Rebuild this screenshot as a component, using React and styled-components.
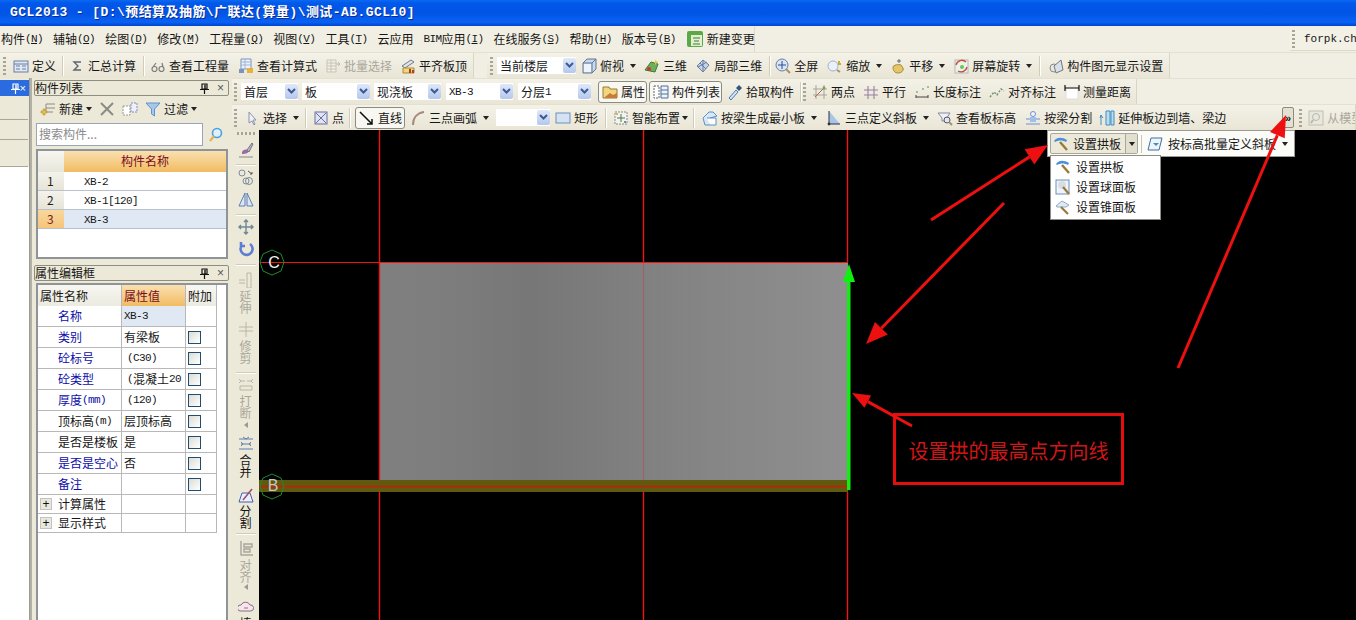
import React from 'react';
import styled, { createGlobalStyle } from 'styled-components';

const Global = createGlobalStyle`
  html, body { margin: 0; padding: 0; background: #000; overflow: hidden; }
  * { box-sizing: border-box; }
`;
const CJK = `"Noto Sans CJK SC", "Liberation Sans", sans-serif`;

const Page = styled.div`
  position: relative; width: 1356px; height: 620px; overflow: hidden;
  display: flex; flex-direction: column; background: #ece9d8;
  font: 12px/14px ${CJK}; color: #161616; white-space: nowrap;
`;
const TitleBar = styled.div`
  height: 26px; flex: none; padding-left: 10px; display: flex; align-items: center;
  background: linear-gradient(#0a6af0 0, #0258ea 12%, #0054e6 50%, #0a62f2 85%, #0044cf 100%);
  color: #fff; font: bold 13px/26px "Liberation Mono", ${CJK}; letter-spacing: 0.43px;
  text-shadow: 1px 1px 0 #0a2c96;
`;
const MenuRow = styled.div`
  height: 26px; flex: none; display: flex; align-items: center; background: #f1efe3;
`;
const MenuBar = styled.div`
  width: 755px; height: 26px; display: flex; align-items: center; padding-left: 1px; gap: 10px;
  border-right: 1px solid #dedbc9;
`;
const MenuItem = styled.span`display: flex; align-items: center;`;
const NewChange = styled.span`display: flex; align-items: center; gap: 4px; margin-left: 1px;`;
const Corner = styled.div`
  margin-left: auto; width: 66px; height: 24px; display: flex; align-items: center; gap: 9px;
  padding-left: 2px; background: #f3f1e6; border-bottom: 1px solid #dcd9c8;
  font: 11px/14px "Liberation Mono", monospace;
`;
const Mono = styled.span`
  font: 11px/14px "Liberation Mono", monospace; letter-spacing: -0.6px; white-space: pre;
`;
const BarRow = styled.div`
  height: 26px; flex: none; display: flex; background: #f1efe3; border-top: 1px solid #e4e1d0;
`;
const Bar = styled.div`
  height: 25px; display: flex; align-items: center; flex: ${p => p.$grow ? 1 : 'none'};
  background: linear-gradient(#f4f2e8, #e9e6d6);
  padding-right: ${p => p.$pad ?? 6}px; margin-left: ${p => p.$ml ?? 0}px;
  border-right: 1px solid #d9d6c4; overflow: hidden;
`;
const Grip = styled.i`
  flex: none; width: 3px; height: 18px; margin-left: ${p => p.$ml}px;
  background: repeating-linear-gradient(#a8a592 0 2px, transparent 2px 4px);
`;
const Sep = styled.i`
  flex: none; width: 2px; height: 20px; margin-left: ${p => p.$ml}px;
  border-left: 1px solid #cfccb9; border-right: 1px solid #fff;
`;
const Tool = styled.span`
  flex: none; display: flex; align-items: center; gap: 3px; margin-left: ${p => p.$ml}px;
  color: ${p => p.$off ? '#aaa79c' : '#161616'};
`;
const Caret = styled.i`
  flex: none; width: 0; height: 0; margin-left: ${p => p.$ml ?? 6}px; margin-right: ${p => p.$mr ?? 0}px;
  border: 3.5px solid transparent; border-top: 4px solid #222; border-bottom: 0;
`;
const Ic = styled.svg`flex: none; width: 16px; height: 16px; display: block;`;
const Combo = styled.span`
  flex: none; display: flex; align-items: center; height: 17px; width: ${p => p.$w}px; margin-left: ${p => p.$ml}px;
  background: #fff; padding-left: 3px; color: #161616;
`;
const ComboBtn = styled.i`
  margin-left: auto; width: 13px; height: 15px; display: flex; align-items: center; justify-content: center;
  background: linear-gradient(#dfe8f8, #b4c8ec); border-radius: 2px;
`;
const Toggle = styled.span`
  flex: none; display: flex; align-items: center; gap: 3px; height: 22px; width: ${p => p.$w}px;
  margin-left: ${p => p.$ml}px; padding-left: 3px; background: #f8f7f2;
  border: 1px solid #8b8b80; border-radius: 3px;
`;
const More = styled.span`
  flex: none; width: 12px; height: 21px; margin-left: ${p => p.$ml}px; display: flex; align-items: center; justify-content: center;
  background: #e4e1d0; border: 1px solid #8b8b80; border-radius: 2px; font: bold 11px/10px "Liberation Sans", sans-serif;
`;
const Main = styled.div`flex: 1; display: flex; min-height: 0;`;
const Stub = styled.div`
  width: 30px; flex: none; display: flex; flex-direction: column; padding-top: 2px;
  border-right: 1px solid #9b9a90; background: #ece9d8;
`;
const StubTitle = styled.div`
  height: 16px; flex: none; display: flex; align-items: center; justify-content: space-between; padding: 0 3px 0 2px;
  background: #2a6bdf; color: #fff; font: 11px/14px "Liberation Sans", sans-serif;
`;
const StubRow = styled.div`
  height: ${p => p.$h}px; flex: none; border-bottom: 1px solid #a9a79a; margin-right: 1px;
`;
const StubBody = styled.div`flex: 1; background: #fff;`;
const Panels = styled.div`
  width: 202px; flex: none; display: flex; flex-direction: column; padding: 2px 3px 0 2px;
  border-left: 2px solid #b3b1a5; background: #ece9d8;
`;
const PanelTitle = styled.div`
  height: 16px; flex: none; display: flex; align-items: center; padding-right: 4px;
  margin-top: ${p => p.$mt ?? 0}px; background: #ece9d8; border: 1px solid #8f8d80; border-radius: 2px;
  font-size: 12px;
`;
const PinBox = styled.svg`margin-left: auto; flex: none; width: 9px; height: 11px; display: block;`;
const Close = styled.span`margin-left: 8px; color: #555; font: 12px/12px "Liberation Sans", sans-serif;`;
const PanelTools = styled.div`height: 26px; flex: none; display: flex; align-items: center;`;
const SearchRow = styled.div`height: 23px; margin-top: 1px; margin-left: 2px; flex: none; display: flex; align-items: center; gap: 5px;`;
const SearchBox = styled.div`
  width: 167px; height: 23px; padding: 3px 2px; background: #fff; color: #8a8a8a;
  border: 1px solid #9aa5b5;
`;
const ListBox = styled.div`
  height: 110px; flex: none; margin: 3px 1px 0 2px; border: 2px solid #8f9498; background: #fff;
`;
const ListHead = styled.div`display: grid; grid-template-columns: 26px 162px; height: 21px;`;
const HeadBlank = styled.div`background: linear-gradient(#f7f6f0, #e8e6da);`;
const HeadOrange = styled.div`
  display: flex; align-items: center; justify-content: center; color: #7a0c22; padding-bottom: 2px;
  background: linear-gradient(#f9e0b0, #f2bb62);
`;
const ListRow = styled.div`
  display: grid; grid-template-columns: 26px 162px; height: 19px;
  border-bottom: 1px solid #b9c2cc;
  background: ${p => p.$sel ? '#dfe8f3' : '#fff'};
`;
const ListIdx = styled.div`
  padding: 0 0 0 9px; display: flex; align-items: center;
  background: ${p => p.$sel ? 'linear-gradient(#f8d79c, #f5c57a)' : 'linear-gradient(#f4f3ec, #e6e4d8)'};
  color: ${p => p.$sel ? '#7a1c22' : '#222'};
`;
const ListName = styled.div`padding: 1px 0 0 20px; display: flex; align-items: center;`;
const PropBox = styled.div`
  flex: 1; margin: 2px 1px 0 2px; border: 2px solid #8f9498; border-bottom: 0; background: #fff;
`;
const PropRow = styled.div`
  display: grid; grid-template-columns: 84px 64px 31px; width: 179px; height: ${p => p.$h}px;
`;
const PCell = styled.div`
  display: flex; align-items: center; border-right: 1px solid #b8b8b8; border-bottom: 1px solid #b8b8b8;
  padding-left: ${p => p.$pl ?? 2}px; color: ${p => p.$c || '#161616'};
  background: ${p => p.$bg || 'transparent'};
  overflow: hidden;
`;
const HeadCell = styled(PCell)`border-bottom: 0;`;
const Check = styled.i`
  width: 13px; height: 13px; border: 1px solid #1f4e72; background: linear-gradient(135deg, #dcdcd4, #fff);
`;
const Plus = styled.i`
  width: 12px; height: 12px; margin-right: 6px; display: flex; align-items: center; justify-content: center;
  background: #e8e8e0; border: 1px solid #c4c4bc; font: normal 12px/10px "Liberation Sans", sans-serif; color: #111;
`;
const Right = styled.div`flex: 1; min-width: 0; display: flex; flex-direction: column;`;
const Work = styled.div`flex: 1; min-height: 0; display: flex;`;
const VBar = styled.div`
  width: 27px; flex: none; display: flex; flex-direction: column; align-items: center; background: #ece9d8;
`;
const VGrip = styled.i`
  width: 18px; height: 3px; margin-top: 2px; flex: none;
  background: repeating-linear-gradient(90deg, #a8a592 0 2px, transparent 2px 4px);
`;
const VSep = styled.i`
  width: 20px; height: 2px; flex: none; margin-top: ${p => p.$mt}px;
  border-top: 1px solid #cfccb9; border-bottom: 1px solid #fff;
`;
const VIcon = styled.span`flex: none; margin-top: ${p => p.$mt}px; display: block; height: 16px;`;
const VText = styled.span`
  flex: none; width: 12px; margin-top: ${p => p.$mt}px; white-space: normal; line-height: 12px; word-break: break-all;
  color: ${p => p.$off ? '#aaa79c' : '#161616'};
`;
const VBack = styled.i`
  flex: none; margin-top: ${p => p.$mt}px; width: 0; height: 0; border: 3px solid transparent; border-right: 4px solid #999; border-left: 0;
`;
const Canvas = styled.div`position: relative; flex: 1; background: #000; overflow: hidden;`;
const CanvasArt = styled.svg`position: absolute; left: 0; top: 0; width: 1097px; height: 490px;`;
const Note = styled.div`
  position: absolute; left: 634px; top: 283px; width: 231px; height: 72px;
  border: 3px solid #e40e0e; display: flex; align-items: center; justify-content: center; padding-top: 3px;
  color: #cf1616; font: 20px/24px ${CJK};
`;
const Popup = styled.div`
  position: absolute; left: 1047px; top: 130px; width: 248px; height: 27px; display: flex; align-items: center;
  background: #fbfbf8; border: 1px solid #9a9a92; padding-left: 2px;
`;
const SplitBtn = styled.span`
  width: 88px; height: 21px; display: flex; align-items: center; padding-left: 2px; gap: 4px;
  background: #ece9d8; border: 1px solid #a9a79a; border-radius: 2px;
`;
const SplitArrow = styled.i`
  margin-left: auto; width: 12px; height: 19px; display: flex; align-items: center; justify-content: center; border-left: 1px solid #a9a79a; background:#e2dfce;
`;
const PopupSep = styled.i`width: 1px; height: 18px; margin-left: 3px; background: #c9c6b5;`;
const PopupTool = styled.span`display: flex; align-items: center; gap: 5px; margin-left: 5px;`;
const Drop = styled.div`
  position: absolute; left: 1050px; top: 155px; width: 111px; height: 65px; padding-top: 1px;
  background: #fff; border: 1px solid #8d8d85;
`;
const DropItem = styled.div`height: 20px; display: flex; align-items: center; gap: 5px; padding-left: 4px;`;
const Overlay = styled.svg`position: absolute; left: 0; top: 0; width: 1356px; height: 620px; pointer-events: none;`;

const T = ({ children }) => String(children).split(/([\x00-\x7f]+)/).filter(Boolean).map((s, i) =>
  /[\x00-\x7f]/.test(s[0]) ? <Mono key={i}>{s}</Mono> : <span key={i}>{s}</span>);

const icons = {
  define: <><rect x="1" y="3" width="14" height="11" fill="#dfe8f5" stroke="#6a7f9f"/><path d="M1 6h14M3 8h4M3 11h4M9 8h4M9 11h4" stroke="#6a7f9f"/></>,
  sigma: <path d="M12 4H5l4 4-4 4h7" fill="none" stroke="#5d6470" strokeWidth="1.4"/>,
  glasses: <path d="M2 11a2.5 2.5 0 1 0 5 0 2.5 2.5 0 0 0-5 0M9 11a2.5 2.5 0 1 0 5 0 2.5 2.5 0 0 0-5 0M3 9l3-4M13 9l-1-4" fill="none" stroke="#7c7f78" strokeWidth="1.2"/>,
  calc: <><path d="M3 1h10v10H3z" fill="#eef3fb" stroke="#7a94bf"/><path d="M3 4h10M3 7h10M7 1v10" stroke="#9cb3d6"/><path d="M1 11h5v4H1z" fill="#7a94bf"/><path d="M9 10h6v5H9z" fill="#e5b23a"/></>,
  batch: <><path d="M2 2h9v12H2z" fill="#f2f0e4" stroke="#c6c4b7"/><path d="M2 5h9M2 8h9M2 11h9M6 2v12" stroke="#c6c4b7"/><path d="M11 6h4M13 4l2 2-2 2" fill="none" stroke="#bdbbae"/></>,
  level: <><path d="M2 8l9-6 3 2-9 6z" fill="#dfe3ea" stroke="#707a88"/><path d="M3 10h11v5H3z" fill="#f5d77a" stroke="#a58a3a"/><path d="M9 11h2v4H9zM12 12h2v3h-2z" fill="#b43a2a"/></>,
  cube: <><path d="M2 5l4-4h9v10l-4 4H2z" fill="#c8d8ee" stroke="#64758e"/><path d="M2 5h9v10M11 5l4-4" fill="none" stroke="#64758e"/><path d="M3 6h7v8H3z" fill="#eef4fb"/></>,
  three: <><path d="M1 12l6-8 7 2-3 8z" fill="#6fae5a" stroke="#3e7a3a"/><circle cx="5" cy="11" r="2" fill="#c83a2a"/><path d="M11 2l3 2-3 3z" fill="#e8c840"/></>,
  local: <><path d="M2 8l6-6 6 5-6 7z" fill="#c6d4ea" stroke="#6a7f9f"/><path d="M5 5l6 6M8 2v12M3 9l9-5" stroke="#6a7f9f" fill="none"/></>,
  full: <><circle cx="7" cy="7" r="6" fill="#d8e4f5" stroke="#6a7f9f"/><path d="M7 3v8M3 7h8" stroke="#2d4f8d"/><path d="M11 11l4 4" stroke="#a8926a" strokeWidth="2"/></>,
  zoom: <><circle cx="6" cy="8" r="5" fill="#eaf1fa" stroke="#9fb2ce"/><path d="M12 3v3M11 6h3" stroke="#d4a92b" strokeWidth="2"/><path d="M10 12l3 2" stroke="#a8926a" strokeWidth="2"/></>,
  pan: <><path d="M3 9c0-2 6-3 8-2l2 3c1 3-2 5-5 5-3 0-5-2-5-6z" fill="#e5c568" stroke="#a58a3a"/><path d="M9 5V1M7 3h4" stroke="#666"/></>,
  rotate: <><rect x="2" y="2" width="13" height="13" fill="#eaf3e8" stroke="#b0b8c0"/><path d="M3 7a6 6 0 0 1 10-3M14 9a6 6 0 0 1-9 4" fill="none" stroke="#d0483a" strokeWidth="1.4"/><circle cx="9" cy="9" r="2" fill="#70c060"/></>,
  display: <><circle cx="6" cy="10" r="4" fill="#e8e8e4" stroke="#888"/><path d="M6 8l7-6 2 10-7 3z" fill="#d8e0ea" stroke="#777"/></>,
  pick: <><path d="M2 14l7-8 2 2-7 8z" fill="#cfe0f2" stroke="#4f7ab0"/><path d="M9 4l3-3 3 3-3 3z" fill="#32557f"/></>,
  two: <><path d="M4 1v14M12 1v14M1 11h14M1 5h14" stroke="#a7a49a"/><path d="M3 13L13 3" stroke="#b0634f"/><circle cx="12" cy="4" r="1.4" fill="#7a9f4f"/></>,
  para: <path d="M5 2v13M11 2v13M1 6h14M1 11h14" stroke="#9a7f9f" strokeWidth="1.1"/>,
  dim: <><path d="M2 11v3M14 11v3M2 13h12" stroke="#444"/><circle cx="3" cy="8" r="1" fill="#8ab07a"/><circle cx="9" cy="5" r="1" fill="#8ab07a"/><circle cx="14" cy="3" r="1" fill="#8ab07a"/></>,
  align: <path d="M1 13l4-5 3 3 4-6 3 2" fill="none" stroke="#6a8f6a" strokeDasharray="2 1.5" strokeWidth="1.4"/>,
  measure: <><rect x="2" y="4" width="12" height="11" fill="#fff" stroke="#ddd"/><path d="M1 1v6M15 1v6M1 4h14" stroke="#111" strokeWidth="1.2"/></>,
  prop: <><path d="M1 3h6l1 2h7v9H1z" fill="#f2d57e" stroke="#9a7a2a"/><path d="M3 13l5-4 3 2 4-2v5H3z" fill="#c87a3a"/></>,
  list: <><rect x="1" y="2" width="5" height="12" fill="#fff" stroke="#666" strokeDasharray="2 1"/><path d="M8 2h7v12H8zM8 6h7M8 10h7" fill="#eef3fa" stroke="#4f6f9a"/></>,
  cursor: <path d="M5 2v11l3-2 2 4 1-1-2-4h3z" fill="#eef1f8" stroke="#8a94a8"/>,
  point: <><rect x="2" y="2" width="12" height="12" fill="#dfe3f2" stroke="#6a6f9f"/><path d="M3 3l10 10M13 3L3 13" stroke="#6a6f9f"/></>,
  line: <path d="M1 2l12 12M13 9v5H8" fill="none" stroke="#111" strokeWidth="1.5"/>,
  arc: <path d="M3 15C3 8 7 3 14 2" fill="none" stroke="#a88a7a" strokeWidth="2"/>,
  rect: <rect x="1" y="3" width="14" height="10" fill="#d4e2f4" stroke="#6f8fb8"/>,
  smart: <><rect x="2" y="2" width="12" height="12" fill="#f4f4ee" stroke="#888" strokeDasharray="2 1"/><path d="M8 4v8M4 8h8" stroke="#4a7a4a"/><circle cx="4" cy="4" r="1" fill="#c8a030"/><circle cx="12" cy="12" r="1" fill="#3a70b0"/></>,
  beam: <><path d="M1 8l6-6h4l4 4-7 2v7H3z" fill="#d8e8f6" stroke="#5a90c0"/><path d="M5 8h9v7H8" fill="#fff" stroke="#5a90c0"/></>,
  slope: <><path d="M3 1v13h11z" fill="#a8c4ea"/><path d="M3 1v13h11" fill="none" stroke="#333"/><circle cx="3" cy="14" r="1.4" fill="#333"/></>,
  viewh: <><path d="M1 3h12l-4 6v2H5V8z" fill="#eef2f6" stroke="#889"/><circle cx="10" cy="10" r="3" fill="#dfe8f2" stroke="#556"/><path d="M12 12l3 3" stroke="#a8926a" strokeWidth="2"/></>,
  split: <><path d="M1 9h14M1 14h14" stroke="#6f8fd0"/><circle cx="8" cy="4" r="2.5" fill="#f5f5f0" stroke="#6f8fd0"/><rect x="5" y="7" width="6" height="5" fill="#9fc0ea"/></>,
  extend: <><path d="M2 15V5M2 5l-1 3M2 5l2 3" stroke="#3f8fc0" fill="none"/><path d="M7 1h4v14H7zM12 1h3v14h-3z" fill="#bcdcf0" stroke="#3f8fc0"/></>,
  model: <><rect x="1" y="1" width="14" height="14" fill="#e8e8de" stroke="#c0bfb2"/><circle cx="8" cy="7" r="3.5" fill="none" stroke="#b8b7aa"/><path d="M5 10l-2 3" stroke="#b8b7aa" strokeWidth="2"/></>,
  newc: <><path d="M6 3h9M6 7h9M6 11h7M6 3v8" stroke="#8c8c84"/><path d="M1 10h2V8h2v2h2v2H5v2H3v-2H1z" fill="#e6c23c" stroke="#a8872a" strokeWidth=".5"/></>,
  del: <path d="M2 2l12 12M14 2L2 14" stroke="#8b8b85" strokeWidth="2"/>,
  copy: <><path d="M1 5h7v9H1z" fill="#fff" stroke="#9a9a90" strokeDasharray="2 1"/><path d="M9 2h6v9H9z" fill="#eef" stroke="#7f8fa8" strokeDasharray="2 1"/></>,
  filter: <path d="M1 2h14L9.5 8v7l-3-2V8z" fill="#a6c8ee" stroke="#5f92c8"/>,
  search: <><circle cx="9" cy="6" r="4.5" fill="#dff0fb" stroke="#4aa0e0" strokeWidth="1.6"/><path d="M6 9l-4 5" stroke="#e0b45a" strokeWidth="2.2"/></>,
  change: <><rect x="0" y="0" width="16" height="16" rx="2" fill="#5aa848"/><rect x="4" y="4" width="11" height="11" fill="#e2f0d0"/><path d="M6 7h7M7 10h5M6 13h7" stroke="#3a7a34"/></>,
  arch: <><path d="M1 5c3-4 8-4 13-1l-1 2c-4-2-7-2-11 0z" fill="#4a90e0"/><path d="M7 6l7 8" stroke="#9a7a3a" strokeWidth="2.4"/></>,
  sphere: <><rect x="1" y="1" width="13" height="14" fill="#eef4fb" stroke="#6f8fb8"/><circle cx="7" cy="6" r="4" fill="#d8dde4"/><path d="M8 8l6 7" stroke="#9a7a3a" strokeWidth="2.2"/></>,
  cone: <><path d="M1 7l6-5 7 4-3 2H2z" fill="#dfeaf6" stroke="#8faccc"/><path d="M6 8l7 7" stroke="#9a7a3a" strokeWidth="2.2"/></>,
  slopeb: <><path d="M4 2h11l-3 12H1z" fill="#eef4fb" stroke="#3f6f9f"/><path d="M6 7h6l-3 3z" fill="#3f8fc0"/></>,
  brush: <><path d="M9 8l5-7 1 1-4 8z" fill="#b8b2d8" stroke="#777"/><path d="M4 10c2-3 5-3 6-1s-2 3-6 3z" fill="#9a6aa8"/><path d="M1 15h14" stroke="#888"/></>,
  offset: <><circle cx="4" cy="4" r="3" fill="none" stroke="#7f8aa0"/><circle cx="11" cy="12" r="3.5" fill="none" stroke="#7f8aa0"/><circle cx="8" cy="12" r="3" fill="none" stroke="#7f8aa0"/><path d="M10 2l4 3M14 3v2h-2" fill="none" stroke="#555"/></>,
  mirror: <><path d="M7 2L1 15h6zM9 2l6 13H9z" fill="#dbe6f4" stroke="#5f7fb0"/></>,
  move: <path d="M8 1v14M1 8h14M6 3l2-2 2 2M6 13l2 2 2-2M3 6L1 8l2 2M13 6l2 2-2 2" fill="none" stroke="#6f8794" strokeWidth="1.4"/>,
  rot: <path d="M12 3a6 6 0 1 1-8 1M3 1v4h4" fill="none" stroke="#5c7fd4" strokeWidth="2.6"/>,
  vext: <path d="M1 8h6M1 11h6M9 1v15M13 1v15M9 1h4M9 16h4" stroke="#b8b6a8"/>,
  vtrim: <path d="M8 1v15M1 6h14M1 10h14" stroke="#b8b6a8"/>,
  vbreak: <path d="M2 5h5M9 5h5M1 3l2 2-2 2M15 3l-2 2 2 2M2 10h12v4H2z" fill="none" stroke="#b8b6a8"/>,
  vmerge: <path d="M1 4h14M1 14h14M3 9h10M5 2l3 2 3-2M3 7l2 2-2 2M13 7l-2 2 2 2" fill="none" stroke="#5f7fb0"/>,
  vsplit: <><path d="M1 15h14L12 6H4z" fill="#eef" stroke="#3f5fb0"/><path d="M5 13L14 2" stroke="#a04a5a" strokeWidth="1.5"/></>,
  valign: <path d="M3 1v14h12M6 4h8v3H6zM6 9h6v3H6z" fill="none" stroke="#a8a69a" strokeWidth="1.4"/>,
  vcloud: <><path d="M2 12a3 3 0 0 1 1-6 5 5 0 0 1 9 0 3 3 0 0 1 1 6z" fill="#f6e6ea" stroke="#7f6f8f"/><path d="M6 9h4" stroke="#c05a7a"/></>,
};
const Icon = ({ n }) => <Ic viewBox="0 0 16 16">{icons[n]}</Ic>;
const Pin = ({ c = '#111' }) => (
  <PinBox viewBox="0 0 9 11"><path d="M2 1h5v5H2zM0 6.5h9M4.5 7v4" fill="none" stroke={c} strokeWidth="1.2" /><path d="M5 1.5v4.5" stroke={c} strokeWidth="1.4" /></PinBox>
);

const Item = ({ ml, i, t, caret, cm, off }) => (
  <>
    <Tool $ml={ml} $off={off}>{i && <Icon n={i} />}<span><T>{t}</T></span></Tool>
    {caret && <Caret $ml={cm} />}
  </>
);
const Chevron = () => (
  <svg width="9" height="7" viewBox="0 0 9 7"><path d="M1 1l3.5 3.5L8 1" fill="none" stroke="#3c5a96" strokeWidth="2" /></svg>
);
const Cb = ({ ml, w, t }) => (
  <Combo $ml={ml} $w={w}><T>{t}</T><ComboBtn><Chevron /></ComboBtn></Combo>
);

const Arrow = ({ x1, y1, x2, y2, w = 3, len = 22, half = 9 }) => {
  const a = Math.atan2(y2 - y1, x2 - x1), c = Math.cos(a), s = Math.sin(a);
  const bx = x2 - c * len, by = y2 - s * len;
  return (
    <g fill="#ec1010" stroke="#ec1010">
      <line x1={x1} y1={y1} x2={bx} y2={by} strokeWidth={w} />
      <polygon stroke="none" points={`${x2},${y2} ${bx - s * half},${by + c * half} ${bx + s * half},${by - c * half}`} />
    </g>
  );
};

const menus = [['构件', 'N'], ['辅轴', 'O'], ['绘图', 'D'], ['修改', 'M'], ['工程量', 'Q'], ['视图', 'V'], ['工具', 'T'], ['云应用'], ['应用', 'I', 'BIM'], ['在线服务', 'S'], ['帮助', 'H'], ['版本号', 'B']];
const rows = [['XB-2'], ['XB-1[120]'], ['XB-3', true]];
const blue = '#0c0ca8';
const props = [
  ['名称', blue, 'XB-3', 2, false, true],
  ['类别', blue, '有梁板', 2, true],
  ['砼标号', blue, '(C30)', 5, true],
  ['砼类型', blue, '(混凝土20', 5, true],
  ['厚度(mm)', blue, '(120)', 5, true],
  ['顶标高(m)', '#161616', '层顶标高', 2, true],
  ['是否是楼板', '#161616', '是', 2, true],
  ['是否是空心', blue, '否', 2, true],
  ['备注', blue, '', 2, true],
];
const Verts = () => (
  <VBar>
    <VGrip />
    <VIcon $mt={7}><Icon n="brush" /></VIcon>
    <VSep $mt={6} />
    <VIcon $mt={3}><Icon n="offset" /></VIcon>
    <VIcon $mt={6}><Icon n="mirror" /></VIcon>
    <VSep $mt={7} />
    <VIcon $mt={3}><Icon n="move" /></VIcon>
    <VIcon $mt={6}><Icon n="rot" /></VIcon>
    <VSep $mt={7} />
    <VIcon $mt={6}><Icon n="vext" /></VIcon>
    <VText $mt={2} $off>延伸</VText>
    <VIcon $mt={7}><Icon n="vtrim" /></VIcon>
    <VText $mt={3} $off>修剪</VText>
    <VSep $mt={8} />
    <VIcon $mt={2}><Icon n="vbreak" /></VIcon>
    <VText $mt={3} $off>打断</VText>
    <VBack $mt={3} />
    <VIcon $mt={7}><Icon n="vmerge" /></VIcon>
    <VText $mt={3}>合并</VText>
    <VIcon $mt={9}><Icon n="vsplit" /></VIcon>
    <VText $mt={2}>分割</VText>
    <VSep $mt={4} />
    <VIcon $mt={5}><Icon n="valign" /></VIcon>
    <VText $mt={3} $off>对齐</VText>
    <VBack $mt={1} />
    <VIcon $mt={9}><Icon n="vcloud" /></VIcon>
    <VText $mt={2}>填</VText>
  </VBar>
);

export default function App() {
  return (
    <Page>
      <Global />
      <TitleBar>GCL2013 - [D:\预结算及抽筋\广联达(算量)\测试-AB.GCL10]</TitleBar>
      <MenuRow>
        <MenuBar>
          {menus.map(([t, k, pre]) => (
            <MenuItem key={t}>{pre && <Mono>{pre}</Mono>}{t}{k && <Mono>(<u>{k}</u>)</Mono>}</MenuItem>
          ))}
          <NewChange><Icon n="change" />新建变更</NewChange>
        </MenuBar>
        <Corner><Grip $ml={0} />forpk.che</Corner>
      </MenuRow>
      <BarRow>
        <Bar>
          <Grip $ml={3} />
          <Item ml={7} i="define" t="定义" />
          <Sep $ml={6} />
          <Item ml={5} i="sigma" t="汇总计算" />
          <Sep $ml={7} />
          <Item ml={5} i="glasses" t="查看工程量" />
          <Item ml={9} i="calc" t="查看计算式" />
          <Item ml={8} i="batch" t="批量选择" off />
          <Item ml={8} i="level" t="平齐板顶" />
        </Bar>
        <Bar $ml={13}>
          <Grip $ml={3} />
          <Cb ml={4} w={79} t="当前楼层" />
          <Item ml={5} i="cube" t="俯视" caret />
          <Item ml={8} i="three" t="三维" />
          <Item ml={8} i="local" t="局部三维" />
          <Sep $ml={7} />
          <Item ml={4} i="full" t="全屏" />
          <Item ml={9} i="zoom" t="缩放" caret />
          <Item ml={8} i="pan" t="平移" caret />
          <Item ml={8} i="rotate" t="屏幕旋转" caret />
          <Sep $ml={7} />
          <Item ml={7} i="display" t="构件图元显示设置" />
        </Bar>
      </BarRow>
      <Main>
        <Stub>
          <StubTitle><Pin c="#fff" /><span>×</span></StubTitle>
          <StubRow $h={24} />
          <StubRow $h={20} />
          <StubRow $h={27} />
          <StubBody />
        </Stub>
        <Panels>
          <PanelTitle>构件列表<Pin /><Close>×</Close></PanelTitle>
          <PanelTools>
            <Item ml={6} i="newc" t="新建" caret cm={3} />
            <Tool $ml={7}><Icon n="del" /></Tool>
            <Tool $ml={7}><Icon n="copy" /></Tool>
            <Item ml={7} i="filter" t="过滤" caret cm={3} />
          </PanelTools>
          <SearchRow>
            <SearchBox>搜索构件...</SearchBox>
            <Icon n="search" />
          </SearchRow>
          <ListBox>
            <ListHead><HeadBlank /><HeadOrange>构件名称</HeadOrange></ListHead>
            {rows.map(([n, sel], i) => (
              <ListRow key={n} $sel={sel}>
                <ListIdx $sel={sel}>{i + 1}</ListIdx>
                <ListName><Mono>{n}</Mono></ListName>
              </ListRow>
            ))}
          </ListBox>
          <PanelTitle $mt={6}>属性编辑框<Pin /><Close>×</Close></PanelTitle>
          <PropBox>
            <PropRow $h={21}>
              <HeadCell $bg="linear-gradient(#f7f6f0, #ecebe0)">属性名称</HeadCell>
              <HeadCell $c="#7a0c22" $bg="linear-gradient(#f9e0b0, #f2bb62)">属性值</HeadCell>
              <HeadCell $bg="linear-gradient(#f7f6f0, #ecebe0)">附加</HeadCell>
            </PropRow>
            {props.map(([n, c, v, pl, chk, sel]) => (
              <PropRow key={n} $h={21}>
                <PCell $pl={20} $c={c}><T>{n}</T></PCell>
                <PCell $pl={pl} $bg={sel ? '#dfe8f3' : undefined}><T>{v}</T></PCell>
                <PCell $pl={2}>{chk && <Check />}</PCell>
              </PropRow>
            ))}
            {['计算属性', '显示样式'].map(n => (
              <PropRow key={n} $h={19}>
                <PCell><Plus>+</Plus>{n}</PCell><PCell /><PCell />
              </PropRow>
            ))}
          </PropBox>
        </Panels>
        <Right>
          <BarRow>
            <Bar $pad={5}>
              <Grip $ml={2} />
              <Cb ml={4} w={57} t="首层" />
              <Cb ml={4} w={68} t="板" />
              <Cb ml={4} w={67} t="现浇板" />
              <Cb ml={5} w={67} t="XB-3" />
              <Cb ml={5} w={73} t="分层1" />
              <Toggle $ml={7} $w={49}><Icon n="prop" />属性</Toggle>
              <Toggle $ml={2} $w={73}><Icon n="list" />构件列表</Toggle>
              <Item ml={5} i="pick" t="拾取构件" />
              <Sep $ml={6} />
              <Grip $ml={1} />
              <Item ml={6} i="two" t="两点" />
              <Item ml={8} i="para" t="平行" />
              <Item ml={8} i="dim" t="长度标注" />
              <Item ml={8} i="align" t="对齐标注" />
              <Item ml={8} i="measure" t="测量距离" />
            </Bar>
          </BarRow>
          <BarRow>
            <Bar $grow>
              <Grip $ml={2} />
              <Item ml={7} i="cursor" t="选择" caret />
              <Sep $ml={6} />
              <Item ml={6} i="point" t="点" />
              <Sep $ml={5} />
              <Toggle $ml={4} $w={50}><Icon n="line" />直线</Toggle>
              <Item ml={5} i="arc" t="三点画弧" caret />
              <Cb ml={7} w={54} t="" />
              <Item ml={5} i="rect" t="矩形" />
              <Sep $ml={7} />
              <Item ml={6} i="smart" t="智能布置" caret cm={2} />
              <Sep $ml={5} />
              <Item ml={7} i="beam" t="按梁生成最小板" caret />
              <Item ml={9} i="slope" t="三点定义斜板" caret />
              <Item ml={8} i="viewh" t="查看板标高" />
              <Item ml={9} i="split" t="按梁分割" />
              <Item ml={7} i="extend" t="延伸板边到墙、梁边" />
              <More $ml={56}>»</More>
              <Grip $ml={5} />
              <Item ml={6} i="model" t="从模型构件" off />
            </Bar>
          </BarRow>
          <Work>
            <Verts />
            <Canvas>
              <CanvasArt viewBox="259 130 1097 490">
                <defs>
                  <linearGradient id="slab" x1="0" x2="1" y1="0" y2="0">
                    <stop offset="0" stopColor="#808080" />
                    <stop offset=".18" stopColor="#7c7c7c" />
                    <stop offset=".32" stopColor="#777777" />
                    <stop offset=".5" stopColor="#7e7e7e" />
                    <stop offset=".72" stopColor="#868686" />
                    <stop offset="1" stopColor="#8f8f8f" />
                  </linearGradient>
                </defs>
                <rect x="380" y="263" width="468" height="217" fill="url(#slab)" />
                <rect x="259" y="480" width="589" height="12" fill="#5f5a10" />
                <g stroke="#f01414" strokeWidth="1.4">
                  <path d="M379.5 130v350M379.5 492v128M643.5 130v133M643.5 492v128M847.5 130v133M847.5 492v128" />
                  <path d="M260 262.5h588" strokeWidth="1" />
                </g>
                <path d="M643.5 263v217" stroke="#a06060" strokeWidth="1" />
                <path d="M259 486.5h589" stroke="#b02a0a" strokeWidth="2" />
                <g fill="none" stroke="#1e8a2e">
                  <polygon points="272,250 281,254 284,262 281,271 272,275 263,271 260,262 263,254" />
                  <polygon points="272,474 281,478 284,486 281,495 272,499 263,495 260,486 263,478" />
                </g>
                <text x="274" y="268" fill="#f0f0f0" fontSize="16" fontFamily="Liberation Sans" textAnchor="middle">C</text>
                <text x="273" y="491" fill="#c8c8c8" fontSize="16" fontFamily="Liberation Sans" textAnchor="middle">B</text>
                <rect x="847" y="280" width="3.5" height="210" fill="#10f010" />
                <polygon points="849,264 843,282 855,282" fill="#10f010" />
              </CanvasArt>
              <Note>设置拱的最高点方向线</Note>
            </Canvas>
          </Work>
        </Right>
      </Main>
      <Popup>
        <SplitBtn>
          <Icon n="arch" />设置拱板
          <SplitArrow><Caret $ml={0} /></SplitArrow>
        </SplitBtn>
        <PopupSep />
        <PopupTool><Icon n="slopeb" />按标高批量定义斜板</PopupTool>
        <Caret $ml={6} />
      </Popup>
      <Drop>
        <DropItem><Icon n="arch" />设置拱板</DropItem>
        <DropItem><Icon n="sphere" />设置球面板</DropItem>
        <DropItem><Icon n="cone" />设置锥面板</DropItem>
      </Drop>
      <Overlay viewBox="0 0 1356 620">
        <Arrow x1={931} y1={220} x2={1048} y2={145} />
        <Arrow x1={1004} y1={203} x2={866} y2={344} />
        <Arrow x1={912} y1={426} x2={852} y2={393} len={18} half={7} />
        <Arrow x1={1178} y1={368} x2={1286} y2={115} len={22} half={8} />
      </Overlay>
    </Page>
  );
}
